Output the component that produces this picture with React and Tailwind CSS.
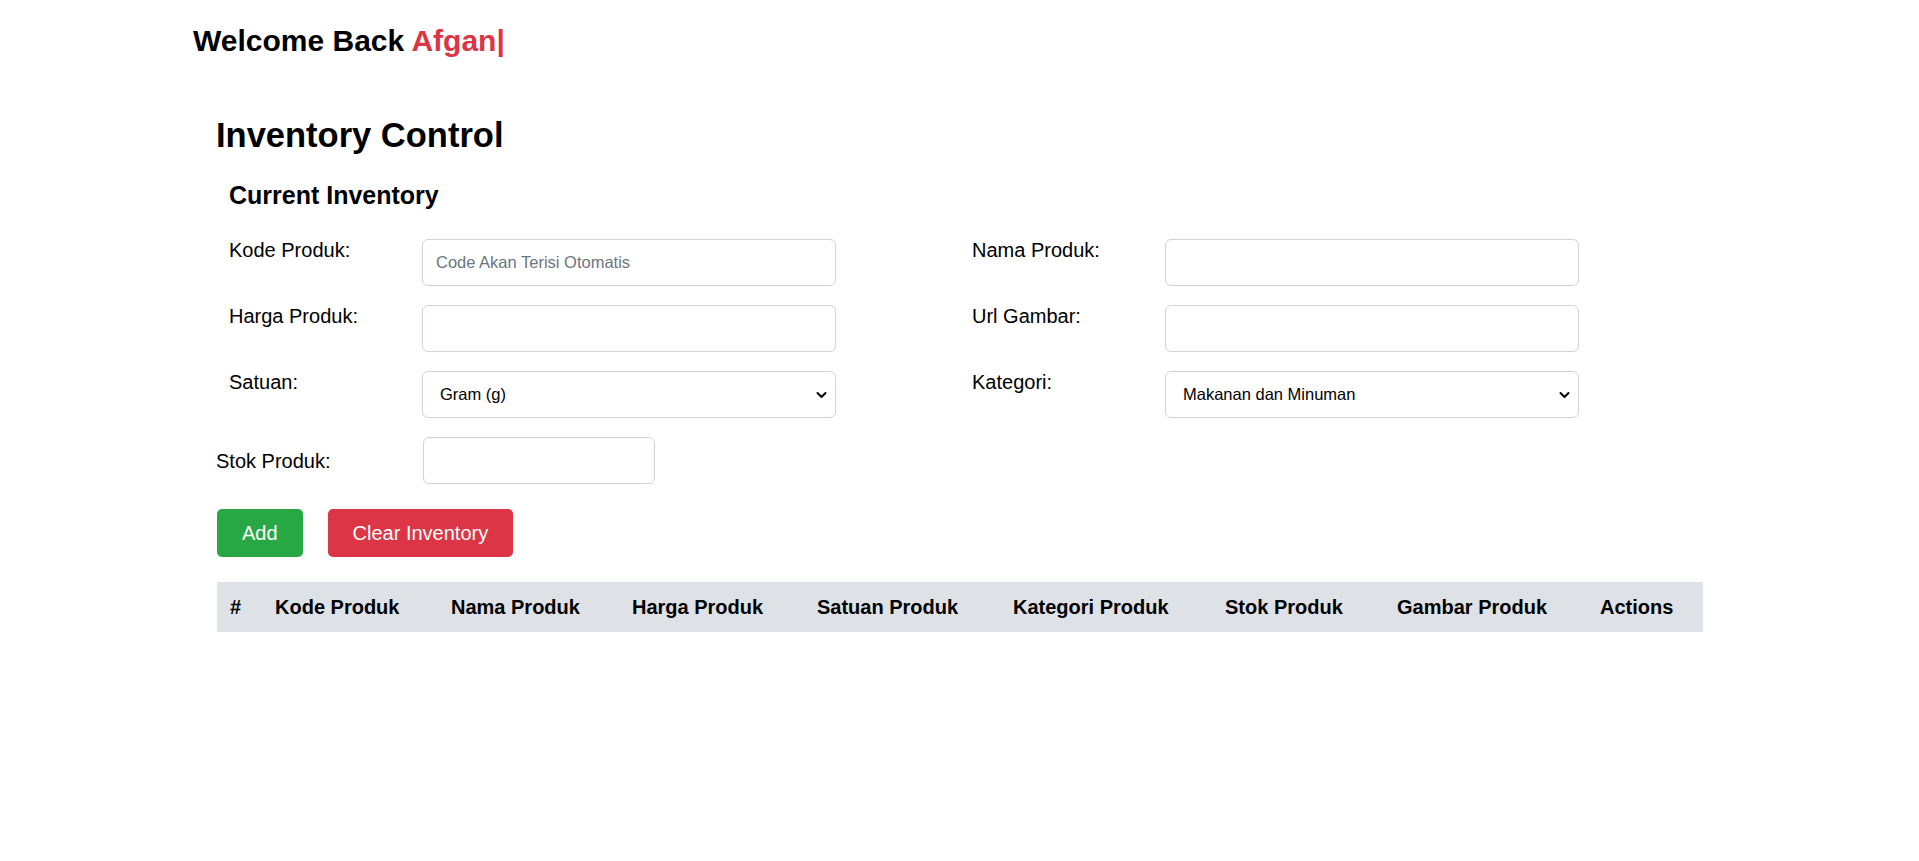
const fieldsLeft = [
  { label: "Kode Produk:", placeholder: "Code Akan Terisi Otomatis" },
  { label: "Harga Produk:" },
  { label: "Satuan:", options: ["Gram (g)", "Kilogram (kg)", "Liter (l)", "Pcs"] },
];

const fieldsRight = [
  { label: "Nama Produk:" },
  { label: "Url Gambar:" },
  { label: "Kategori:", options: ["Makanan dan Minuman", "Elektronik", "Pakaian"] },
];

const columns = [
  { name: "#", w: "w-[45px]" },
  { name: "Kode Produk", w: "w-[176px]" },
  { name: "Nama Produk", w: "w-[181px]" },
  { name: "Harga Produk", w: "w-[185px]" },
  { name: "Satuan Produk", w: "w-[196px]" },
  { name: "Kategori Produk", w: "w-[212px]" },
  { name: "Stok Produk", w: "w-[172px]" },
  { name: "Gambar Produk", w: "w-[203px]" },
  { name: "Actions", w: "w-[116px]" },
];

const Chevron = () => (
  <svg
    className="pointer-events-none absolute right-[9px] top-1/2 -translate-y-1/2 w-[11px] h-[7px]"
    viewBox="0 0 11 7"
    fill="none"
    stroke="black"
    strokeWidth="2"
    strokeLinecap="round"
    strokeLinejoin="round"
  >
    <path d="M1.5 1.5L5.5 5.5L9.5 1.5" />
  </svg>
);

const Field = ({ label, placeholder, options }) => {
  return (
    <div className="flex items-start">
      <label className="w-[193px] shrink-0 text-[20px] leading-[22px]">{label}</label>
      {options ? (
        <div className="relative w-[414px] h-[47px]">
          <select className="appearance-none w-full h-full border border-[#ced4da] rounded-[6px] bg-white pl-[17px] pr-[30px] text-[16.5px] text-black outline-none">
            {options.map((o) => (
              <option key={o}>{o}</option>
            ))}
          </select>
          <Chevron />
        </div>
      ) : (
        <input
          type="text"
          placeholder={placeholder}
          className="w-[414px] h-[47px] border border-[#ced4da] rounded-[6px] px-[13px] text-[16.5px] outline-none placeholder:text-[#6c757d]"
        />
      )}
    </div>
  );
};

export default function App() {
  return (
    <div className="min-h-screen bg-white text-black font-['Liberation_Sans',Arial,sans-serif]">
      <div className="pl-[193px] pt-[23px]">
        <h1 className="text-[30px] font-bold leading-[36px]">
          Welcome Back <span className="text-[#dc3545]">Afgan|</span>
        </h1>
      </div>

      <div className="pl-[216px] pr-[216px] mt-[56px]">
        <h2 className="text-[34.5px] font-bold leading-[40px]">Inventory Control</h2>
        <h3 className="mt-[25px] pl-[13px] text-[25px] font-bold leading-[30px]">Current Inventory</h3>

        <div className="mt-[29px] pl-[13px] grid grid-cols-[607px_607px] gap-x-[136px]">
          <div className="flex flex-col gap-[19px]">
            {fieldsLeft.map((f) => (
              <Field key={f.label} {...f} />
            ))}
          </div>
          <div className="flex flex-col gap-[19px]">
            {fieldsRight.map((f) => (
              <Field key={f.label} {...f} />
            ))}
          </div>
        </div>

        <div className="mt-[19px] flex items-center">
          <label className="w-[207px] shrink-0 text-[20px] leading-[22px]">Stok Produk:</label>
          <input
            type="number"
            className="w-[232px] h-[47px] border border-[#ced4da] rounded-[6px] px-[13px] text-[16.5px] outline-none"
          />
        </div>

        <div className="mt-[25px] flex gap-[25px] pl-[1px]">
          <button className="h-[48px] px-[25px] rounded-[5px] bg-[#28a745] text-white text-[20px]">Add</button>
          <button className="h-[48px] px-[25px] rounded-[5px] bg-[#dc3545] text-white text-[20px]">Clear Inventory</button>
        </div>

        <div className="mt-[25px] pl-[1px]">
          <table className="w-[1486px] table-fixed border-collapse">
            <thead>
              <tr className="bg-[#dee2e6]">
                {columns.map((c) => (
                  <th key={c.name} className={`${c.w} h-[50px] px-[13px] text-left text-[20px] font-bold`}>
                    {c.name}
                  </th>
                ))}
              </tr>
            </thead>
            <tbody></tbody>
          </table>
        </div>
      </div>
    </div>
  );
}
